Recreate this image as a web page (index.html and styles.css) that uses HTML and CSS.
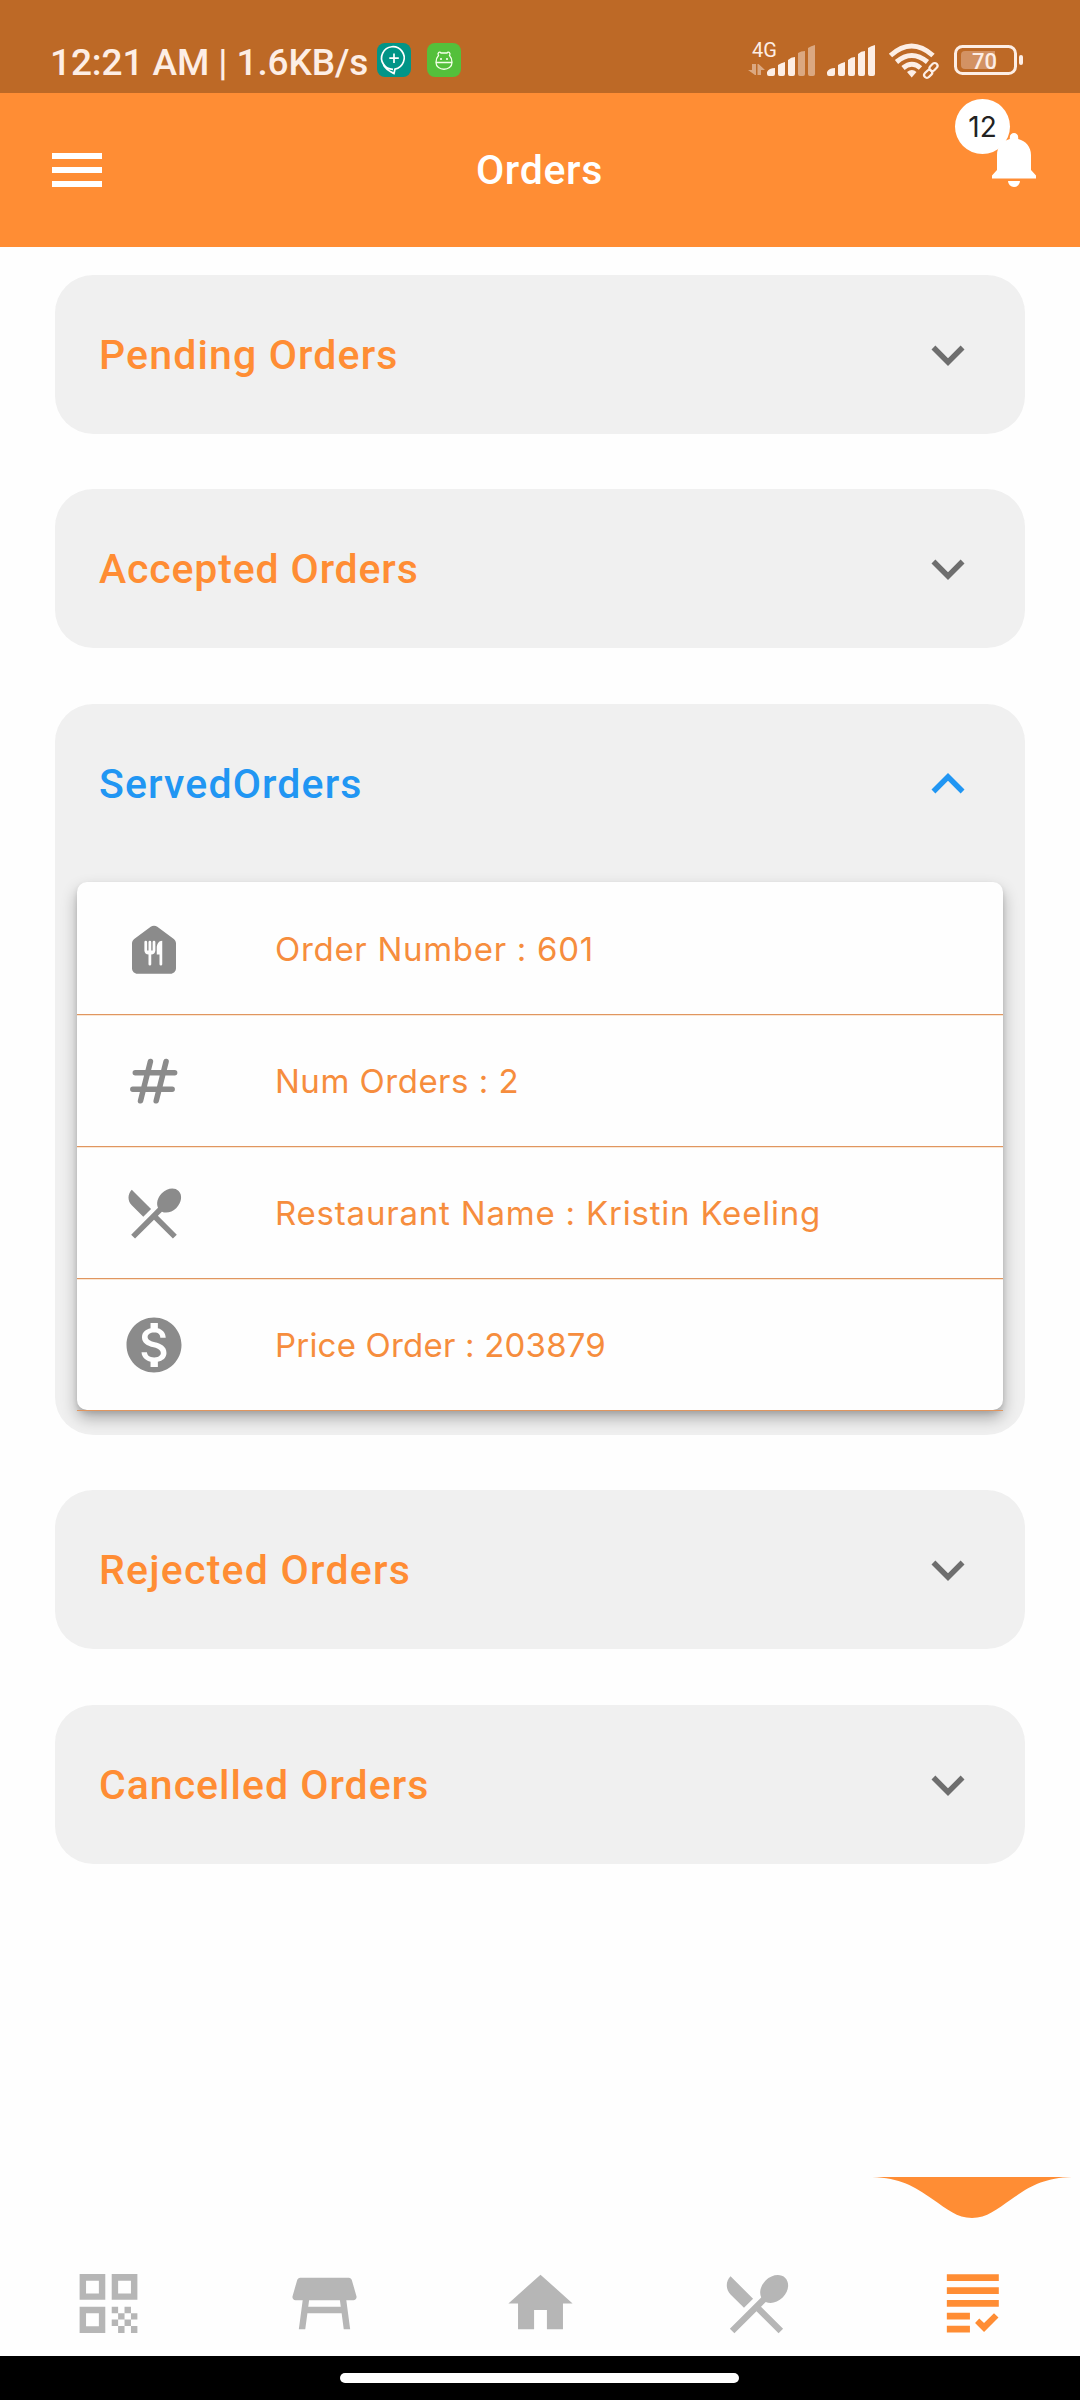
FILE: index.html
```html
<!DOCTYPE html>
<html lang="en">
<head>
<meta charset="utf-8">
<title>Orders</title>
<link rel="stylesheet" href="styles.css">
</head>
<body>
<div class="screen">
  <div class="status">
    <span class="clock">12:21 AM | 1.6KB/s</span>
    <svg class="app-icon" width="34" height="34" viewBox="0 0 34 34"><rect width="34" height="34" rx="8" fill="#019587"/><path d="M16 26.300a11.300 11.300 0 1 1 2-.2L17 30.500C13 28.500 8.500 26.500 6.500 22M17 10.500v9.500M12.300 15.200h9.500" fill="none" stroke="#fff" stroke-width="1.700"/></svg>
    <svg class="app-icon app-icon-green" width="34" height="34" viewBox="0 0 34 34"><rect width="34" height="34" rx="8" fill="#54c03b"/><g fill="none" stroke="#f4ffe9" stroke-width="1.300"><path d="M9 19.500h16c0 9-16 9-16 0zM9 19.500c0-3 .5-5 2.500-7-1.500-2.500 1-4.500 2.500-2.500h6c1.500-2 4 0 2.500 2.500 2 2 2.500 4 2.500 7"/></g><circle cx="14" cy="16" r="1" fill="#fff"/><circle cx="20" cy="16" r="1" fill="#fff"/></svg>
    <div class="indicators">
      <svg width="68" height="45" viewBox="748 35 68 45" fill="#fdeee5"><text class="network" x="752" y="57">4G</text><g opacity=".48"><path d="M748 70h4v-6h4v11h-1zM757.500 75V64h1l6.500 6h-4v5z"/><path d="M798 53q3-2 7-2v23q0 2-2 2h-3q-2 0-2-2zM808 48q3-2 7-3v29q0 2-2 2h-3q-2 0-2-2z"/></g><path d="M767 72q2-4 8-4v6q0 2-2 2h-4q-2 0-2-2zM778 65q3-2 7-3v12q0 2-2 2h-3q-2 0-2-2zM788 60q3-3 7-3v17q0 2-2 2h-3q-2 0-2-2z"/></svg>
      <svg class="sim2" width="49" height="45" viewBox="827 35 49 45" fill="#fdeee5"><path d="M827 72q2-4 8-4v6q0 2-2 2h-4q-2 0-2-2zM838 65q3-2 7-3v12q0 2-2 2h-3q-2 0-2-2zM848 60q3-3 7-3v17q0 2-2 2h-3q-2 0-2-2zM858 54q3-3 7-3v23q0 2-2 2h-3q-2 0-2-2zM868 48q3-2 7-3v29q0 2-2 2h-3q-2 0-2-2z"/></svg>
      <svg class="wifi" width="52" height="45" viewBox="888 35 52 45" fill="none" stroke="#fdeee5"><path d="M890.500 55.500q21-19 42.500 0M896.500 62q15-13 31 0M903 68q9-7.500 17.500 0" stroke-width="5"/><path d="M907 72q5-4 9.500 0l-4.800 5.500z" fill="#fdeee5" stroke="none"/><g stroke-width="2.200"><rect x="-3.800" y="-2.800" width="9" height="5.600" rx="2.800" transform="translate(933 67.500) rotate(-45)"/><rect x="-5" y="-2.800" width="9" height="5.600" rx="2.800" transform="translate(928.500 73.500) rotate(-45)"/></g></svg>
      <svg class="battery" width="70" height="45" viewBox="954 35 70 45"><rect x="955.500" y="46.500" width="60" height="27" rx="7" fill="none" stroke="#fdeee5" stroke-width="3"/><path d="M965 51h30v18h-30q-4 0-4-4V55q0-4 4-4z" fill="#d39263"/><rect x="1019" y="55" width="4" height="10" rx="2" fill="#fdeee5"/><text class="level" x="984.500" y="68.500">70</text></svg>
    </div>
  </div>

  <header class="appbar">
    <svg class="menu" width="50" height="34" viewBox="0 0 50 34" fill="#fff"><path d="M0 0h50v6H0zM0 14h50v6H0zM0 28h50v6H0z"/></svg>
    <h1 class="title">Orders</h1>
    <div class="alerts">
      <svg class="bell" width="44" height="54" viewBox="0 0 44 54" fill="#fff"><path d="M22 0a4.200 4.200 0 0 1 4.200 4.200V6C34 8 39 14 39 22v15l5 5.500V45.500H0v-3L5 37V22C5 14 10 8 17.800 6V4.200A4.200 4.200 0 0 1 22 0zM16 48h12a6 6 0 0 1-12 0z"/></svg>
      <span class="badge">12</span>
    </div>
  </header>

  <main class="list">
    <section class="card"><div class="card-head"><h2 class="name">Pending Orders</h2><svg class="chevron" viewBox="0 0 24 24"><path d="M16.590 8.590L12 13.170 7.410 8.590 6 10l6 6 6-6z"/></svg></div></section>
    <section class="card"><div class="card-head"><h2 class="name accepted">Accepted Orders</h2><svg class="chevron" viewBox="0 0 24 24"><path d="M16.590 8.590L12 13.170 7.410 8.590 6 10l6 6 6-6z"/></svg></div></section>
    <section class="card open">
      <div class="card-head"><h2 class="name served">ServedOrders</h2><svg class="chevron" viewBox="0 0 24 24"><path d="M12 8l-6 6 1.410 1.410L12 10.830l4.590 4.580L18 14z"/></svg></div>
      <div class="panel">
        <div class="row"><svg class="icon" viewBox="0 0 24 24"><path fill-rule="evenodd" d="M10.800 3.900L4.800 8.400C4.300 8.800 4 9.400 4 10v9c0 1.100.9 2 2 2h12c1.100 0 2-.9 2-2v-9c0-.6-.3-1.200-.8-1.600l-6-4.500c-.7-.5-1.700-.5-2.400 0zM12.500 12.500c0 .830-.67 1.500-1.500 1.500v3.500a.5.5 0 0 1-1 0V14c-.83 0-1.500-.67-1.500-1.500v-3a.5.5 0 0 1 1 0v3h.5v-3a.5.5 0 0 1 1 0v3h.5v-3a.5.5 0 0 1 1 0zM15 17.500a.5.500 0 0 1-1 0V14h-1v-2.500C13 10.300 13.700 9 15 9z"/></svg><span class="r1">Order Number : 601</span></div>
        <div class="row"><svg class="icon" viewBox="0 0 24 24"><path d="M10.700 4.900L7.100 19.200M16.400 4.900L12.800 19.200M5.200 9h14.300M4.300 15h14.300" fill="none" stroke="#8b8b8b" stroke-width="2" stroke-linecap="round"/></svg><span class="r2">Num Orders : 2</span></div>
        <div class="row"><svg class="icon" viewBox="0 0 24 24"><path d="M8.100 13.340l2.830-2.830L3.910 3.500c-1.560 1.560-1.560 4.090 0 5.660l4.190 4.180zm6.780-1.810c1.530.71 3.680.21 5.270-1.380 1.910-1.910 2.280-4.650.81-6.120-1.460-1.460-4.200-1.100-6.120.81-1.590 1.590-2.090 3.740-1.380 5.270L3.700 19.870l1.410 1.410L12 14.410l6.880 6.880 1.410-1.410L13.410 13l1.470-1.470z"/></svg><span class="r3">Restaurant Name : Kristin Keeling</span></div>
        <div class="row"><svg class="icon" viewBox="0 0 24 24"><path d="M12 2C6.480 2 2 6.480 2 12s4.480 10 10 10 10-4.480 10-10S17.520 2 12 2zm1.410 16.090V20h-2.670v-1.930c-1.710-.36-3.160-1.460-3.270-3.400h1.960c.1 1.050.82 1.870 2.650 1.870 1.960 0 2.400-.98 2.400-1.590 0-.83-.44-1.610-2.670-2.140-2.480-.6-4.180-1.620-4.180-3.670 0-1.720 1.390-2.840 3.110-3.210V4h2.670v1.950c1.860.45 2.790 1.860 2.850 3.390H14.300c-.05-1.110-.64-1.870-2.220-1.870-1.500 0-2.400.68-2.400 1.640 0 .84.65 1.390 2.670 1.910s4.180 1.390 4.180 3.910c-.02 1.830-1.380 2.830-3.120 3.160z"/></svg><span class="r4">Price Order : 203879</span></div>
      </div>
    </section>
    <section class="card"><div class="card-head"><h2 class="name rejected">Rejected Orders</h2><svg class="chevron" viewBox="0 0 24 24"><path d="M16.590 8.590L12 13.170 7.410 8.590 6 10l6 6 6-6z"/></svg></div></section>
    <section class="card"><div class="card-head"><h2 class="name cancelled">Cancelled Orders</h2><svg class="chevron" viewBox="0 0 24 24"><path d="M16.590 8.590L12 13.170 7.410 8.590 6 10l6 6 6-6z"/></svg></div></section>
  </main>

  <nav class="tabs">
    <div class="tab"><svg class="tab-icon" viewBox="0 0 24 24"><path fill-rule="evenodd" d="M3 2.800h8v8H3zM5 4.900v4h4v-4zM13 2.800h8v8h-8zM15 4.900v4h4v-4zM3 13h8v8.200H3zM5 15v4.100h4V15z"/><path d="M13 13h2v2h-2zM17 13h2v2h-2zM15 15h2v2h-2zM19 15h2v2h-2zM13 17h2v2h-2zM17 17h2v2h-2zM15 19h2v2.200h-2zM19 19h2v2.200h-2z"/></svg></div>
    <div class="tab"><svg class="tab-icon" viewBox="0 0 24 24"><path fill-rule="evenodd" d="M21.960 9.730l-1.430-5c-.12-.43-.51-.73-.96-.73H4.430c-.45 0-.84.3-.96.73l-1.430 5C1.860 10.360 2.340 11 3 11h2.200L4 20h2l.67-5h10.670l.66 5h2l-1.200-9H21c.66 0 1.140-.64.96-1.270zM6.930 13l.27-2h9.600l.27 2H6.930z"/></svg></div>
    <div class="tab"><svg class="tab-icon" viewBox="0 0 24 24"><path d="M10 20v-6h4v6h5v-8h3L12 3 2 12h3v8z"/></svg></div>
    <div class="tab"><svg class="tab-icon" viewBox="0 0 24 24"><path d="M8.100 13.340l2.830-2.830L3.910 3.500c-1.560 1.560-1.560 4.090 0 5.660l4.190 4.180zm6.780-1.810c1.530.71 3.680.21 5.270-1.380 1.910-1.910 2.280-4.650.81-6.120-1.460-1.460-4.200-1.100-6.120.81-1.590 1.590-2.090 3.740-1.380 5.270L3.700 19.870l1.410 1.410L12 14.410l6.880 6.880 1.410-1.410L13.410 13l1.470-1.470z"/></svg></div>
    <div class="tab active"><svg class="marker" viewBox="0 0 200 41"><path d="M0 0C28 1 42 9 61 22.500C75 32 85 41 100 41S125 32 139 22.500C158 9 172 1 200 0z"/></svg><svg class="tab-icon" viewBox="0 0 24 24"><path d="M4 2.900h16.200V5H4zM4 6.900h16.200V9H4zM4 10.900h16.200V13H4zM4 14.900h7.200V17H4zM4 18.900h7.200V21H4zM18.700 15l1.400 1.400-4.500 4.500-2.800-2.800 1.300-1.400 1.500 1.400z"/></svg></div>
  </nav>
  <div class="gesture"><div class="pill"></div></div>
</div>
</body>
</html>
```
FILE: styles.css
```css
* { box-sizing: border-box; }
body { margin: 0; background: #fefefe; }
svg { display: block; flex: none; }
h1, h2 { margin: 0; }
.screen { width: 1080px; height: 2400px; display: flex; flex-direction: column; overflow: hidden; }

.status { height: 93px; flex: none; background: #bd6926; display: flex; padding: 35px 56px 0 50px; align-items: flex-start; }
.clock { width: 327px; padding-top: 6px; font: 500 37px/44px Roboto, sans-serif; letter-spacing: -.1px; color: #fdeee5; white-space: nowrap; }
.app-icon { margin-top: 8px; }
.app-icon-green { margin-left: 16px; }
.indicators { margin-left: auto; display: flex; }
.sim2 { margin-left: 11px; }
.wifi { margin-left: 12px; }
.battery { margin-left: 14px; }
.network { font: 400 20px Roboto, sans-serif; }
.level { font: 500 22px Roboto, sans-serif; fill: #fdeee5; text-anchor: middle; }

.appbar { height: 154px; flex: none; background: #ff8d34; display: grid; grid-template-columns: 1fr auto 1fr; align-items: center; padding: 0 44px 0 52px; }
.title { font: 500 41px/50px Roboto, sans-serif; letter-spacing: .7px; color: #fff; padding-right: 9px; }
.alerts { position: relative; justify-self: end; margin-bottom: 20px; }
.badge { position: absolute; left: -37px; top: -34px; width: 55px; height: 55px; border-radius: 50%; background: #fff; color: #222; font: 400 28px/57px Inter, sans-serif; text-align: center; }

.list { flex: 1; padding: 28px 55px 0; }
.card { height: 159px; margin-bottom: 55px; border-radius: 38px; background: #f0f0f0; overflow: hidden; }
.card:nth-child(even) { margin-bottom: 56px; }
.card.open { height: 731px; }
.card-head { height: 159px; display: flex; align-items: center; justify-content: space-between; padding: 0 44px; }
.name { font: 500 41px/50px Roboto, sans-serif; letter-spacing: 1.15px; color: #ff8d34; white-space: nowrap; }
.name.accepted { letter-spacing: .85px; }
.name.rejected { letter-spacing: 1.25px; }
.name.cancelled { letter-spacing: 1px; }
.chevron { width: 66px; height: 66px; fill: #6e6e6e; }
.open .chevron { fill: #2196f3; }
.name.served { color: #2196f3; }

.panel { width: 926px; height: 528px; margin: 19px 22px 0; border-radius: 10px; background: #fefefe; box-shadow: 0 8px 16px rgba(0,0,0,.3), 0 3px 5px rgba(0,0,0,.1); }
.row { height: 132px; display: flex; align-items: center; padding-left: 44px; padding-top: 2px; box-shadow: 0 1px #e09660, 0 2px #fae6d3; }
.row:last-child { box-shadow: 0 1px #e09660; }
.row span { margin-left: 88px; font: 400 33px/44px Inter, sans-serif; color: #f68d3d; white-space: nowrap; }
.row .r1 { letter-spacing: .7px; }
.row .r2 { letter-spacing: .5px; }
.row .r3 { letter-spacing: .8px; }
.row .r4 { letter-spacing: .2px; }
.icon { width: 66px; height: 66px; fill: #8b8b8b; }

.tabs { height: 180px; flex: none; display: grid; grid-template-columns: repeat(5, 1fr); }
.tab { display: flex; flex-direction: column; align-items: center; justify-content: flex-end; padding-bottom: 14px; }
.tab-icon { width: 77px; height: 77px; fill: #b6b6b6; }
.active { justify-content: space-between; }
.active .tab-icon, .marker { fill: #ff8d34; }
.marker { width: 200px; height: 41px; margin-top: 1px; }

.gesture { height: 44px; flex: none; background: #000; display: flex; padding: 17px 0 0 340px; }
.pill { width: 399px; height: 10px; border-radius: 5px; background: #fff; }
```
